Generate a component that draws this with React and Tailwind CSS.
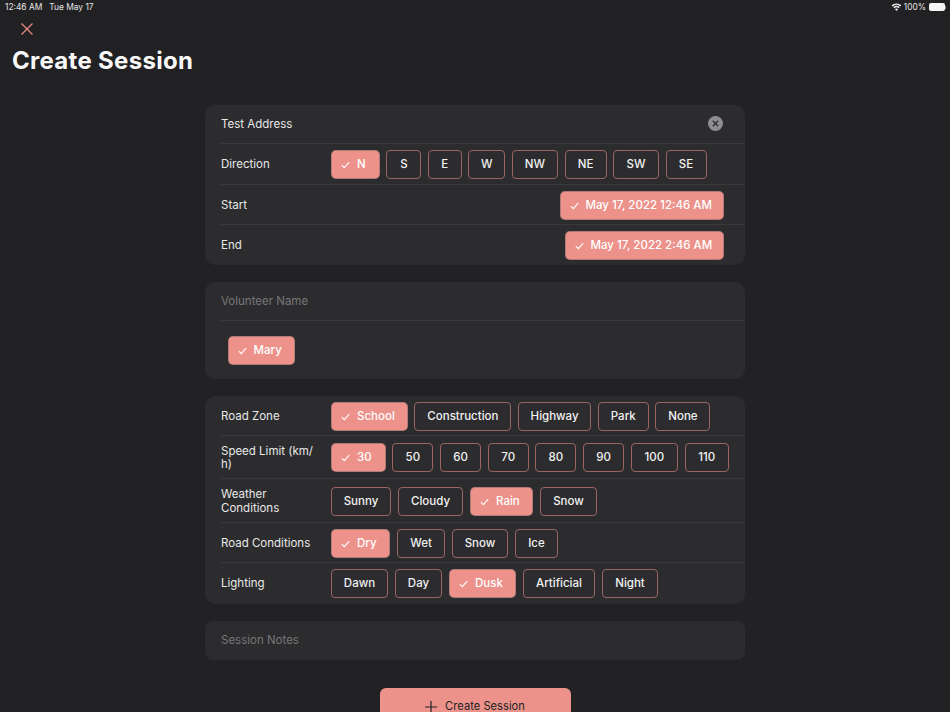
import React from "react";

const Check = () => (
  <svg width="9" height="8" viewBox="0 0 9 8" fill="none" className="shrink-0 mr-[7px]">
    <path d="M0.8 4.2 L3.3 6.7 L8.2 1.2" stroke="#ffffff" strokeWidth="1.1" />
  </svg>
);

const Chip = ({ label, on, w }) =>
  on ? (
    <div
      className="h-[29px] shrink-0 rounded-[5px] bg-[#ec928a] border border-[#5a5a5a]/40 text-white flex items-center pl-[9px] pt-px text-[11.5px] font-medium whitespace-nowrap"
      style={{ width: w }}
    >
      <Check />
      <span>{label}</span>
    </div>
  ) : (
    <div
      className="h-[29px] shrink-0 rounded-[4px] border border-[#9a6560] bg-[#2c2c2e] text-[#f2f2f2] flex items-center justify-center pt-px text-[11.5px] font-medium whitespace-nowrap"
      style={{ width: w }}
    >
      {label}
    </div>
  );

const Divider = () => <div className="absolute left-4 right-0 bottom-0 h-px bg-[#39393b]" />;

const Row = ({ label, h, chips, last, tight }) => (
  <div className="relative flex items-center pl-4" style={{ height: h }}>
    <div className="w-[94px] mr-4 shrink-0 pt-px text-[11.5px] leading-[13.5px] text-[#e8e8e8]">{label}</div>
    <div className={tight ? "flex gap-[6.7px]" : "flex gap-[7px]"}>
      {chips.map(([l, w, on]) => (
        <Chip key={l} label={l} w={w} on={on} />
      ))}
    </div>
    {!last && <Divider />}
  </div>
);

const DateRow = ({ label, value, w, h, last }) => (
  <div className="relative flex items-center justify-between pl-4 pr-[21.5px]" style={{ height: h }}>
    <div className="pt-px text-[11.5px] text-[#e8e8e8]">{label}</div>
    <Chip label={value} w={w} on />
    {!last && <Divider />}
  </div>
);

export default function App() {
  return (
    <div
      className="w-[950px] h-[712px] overflow-hidden bg-[#222224] text-white flex flex-col"
      style={{ fontFamily: "Inter, 'Noto Sans', sans-serif" }}
    >
      <div className="h-[80px] shrink-0 bg-[#212123] border-b border-[#242426]">
        <div className="flex items-center justify-between h-[15px] pl-[5px] pr-[4px] text-[8.4px] text-[#e6e6e6]">
          <div className="flex gap-[7px]">
            <span>12:46 AM</span>
            <span>Tue May 17</span>
          </div>
          <div className="flex items-center gap-[2px]">
            <svg width="11" height="8" viewBox="0 0 11 8" fill="#eeeeee" className="-mr-px">
              <path d="M5.5 8 L3.9 6 A2.6 2.6 0 0 1 7.1 6 Z" />
              <path d="M3.2 5.2 L2.3 4.1 A5 5 0 0 1 8.7 4.1 L7.8 5.2 A3.6 3.6 0 0 0 3.2 5.2 Z" />
              <path d="M1.6 3.4 L0.6 2.2 A7.6 7.6 0 0 1 10.4 2.2 L9.4 3.4 A6.2 6.2 0 0 0 1.6 3.4 Z" />
            </svg>
            <span className="ml-[1px]">100%</span>
            <div className="ml-[1px] flex items-center">
              <div className="w-[16px] h-[8px] rounded-[2px] bg-[#f4f4f4]" />
              <div className="w-px h-[3px] bg-[#888]" />
            </div>
          </div>
        </div>
        <div className="pl-[21px] pt-[8px]">
          <svg width="12" height="12" viewBox="0 0 12 12" fill="none" stroke="#e58a82" strokeWidth="1.3" className="block">
            <path d="M0.5 0.5 L11.5 11.5 M11.5 0.5 L0.5 11.5" />
          </svg>
        </div>
        <div className="pl-3 mt-[11px] text-[24px] leading-[29px] font-bold tracking-[0.3px] text-[#f8f8f8]">Create Session</div>
      </div>

      <div className="w-[540px] mx-auto pt-[25px] flex flex-col gap-[17px]">
        <div className="rounded-[10px] bg-[#2c2c2e]">
          <div className="relative flex items-center justify-between pl-4 pr-[22px] h-[39px]">
            <div className="pt-px text-[11.5px] text-[#e8e8e8]">Test Address</div>
            <div className="w-[15px] h-[15px] -mt-[2px] rounded-full bg-[#8e8e90] flex items-center justify-center">
              <svg width="7" height="7" viewBox="0 0 7 7" stroke="#2c2c2e" strokeWidth="1.3">
                <path d="M0.8 0.8 L6.2 6.2 M6.2 0.8 L0.8 6.2" />
              </svg>
            </div>
            <Divider />
          </div>
          <Row
            label="Direction"
            h={41}
            tight
            chips={[
              ["N", 48.7, true],
              ["S", 35],
              ["E", 33.5],
              ["W", 37],
              ["NW", 46],
              ["NE", 42],
              ["SW", 45.5],
              ["SE", 41],
            ]}
          />
          <DateRow label="Start" value="May 17, 2022 12:46 AM" w={164} h={40} />
          <DateRow label="End" value="May 17, 2022 2:46 AM" w={159} h={40} last />
        </div>

        <div className="rounded-[10px] bg-[#2c2c2e] h-[97px]">
          <div className="relative flex items-center pl-4 pt-px h-[39px] text-[11.5px] text-[#767678]">
            Volunteer Name
            <Divider />
          </div>
          <div className="pl-[22.5px] pt-[14.5px]">
            <Chip label="Mary" w={67} on />
          </div>
        </div>

        <div className="rounded-[10px] bg-[#2c2c2e]">
          <Row
            label="Road Zone"
            h={40}
            tight
            chips={[
              ["School", 76.7, true],
              ["Construction", 97],
              ["Highway", 73],
              ["Park", 51],
              ["None", 55],
            ]}
          />
          <Row
            label={
              <>
                Speed Limit (km/<wbr />h)
              </>
            }
            h={43}
            tight
            chips={[
              ["30", 54.7, true],
              ["50", 41],
              ["60", 41],
              ["70", 41],
              ["80", 41],
              ["90", 41],
              ["100", 47],
              ["110", 44.5],
            ]}
          />
          <Row
            label="Weather Conditions"
            h={44}
            chips={[
              ["Sunny", 60],
              ["Cloudy", 65],
              ["Rain", 63, true],
              ["Snow", 57],
            ]}
          />
          <Row
            label="Road Conditions"
            h={40}
            chips={[
              ["Dry", 59, true],
              ["Wet", 48],
              ["Snow", 56],
              ["Ice", 43],
            ]}
          />
          <Row
            label="Lighting"
            h={41}
            last
            chips={[
              ["Dawn", 57],
              ["Day", 47],
              ["Dusk", 67, true],
              ["Artificial", 72],
              ["Night", 56],
            ]}
          />
        </div>

        <div className="rounded-[8px] bg-[#2c2c2e] h-[39px] flex items-center pl-4 pt-px text-[11.5px] text-[#767678]">
          Session Notes
        </div>

        <div className="mt-[11px] mx-auto w-[191px] h-[40px] shrink-0 rounded-[6px] bg-[#ec928a] flex items-center justify-center text-[#222224] text-[11.2px] pb-[3px]">
          <svg width="12" height="12" viewBox="0 0 12 12" stroke="#222224" strokeWidth="1.2" className="mr-2">
            <path d="M6 0 V12 M0 6 H12" />
          </svg>
          Create Session
        </div>
      </div>
    </div>
  );
}
